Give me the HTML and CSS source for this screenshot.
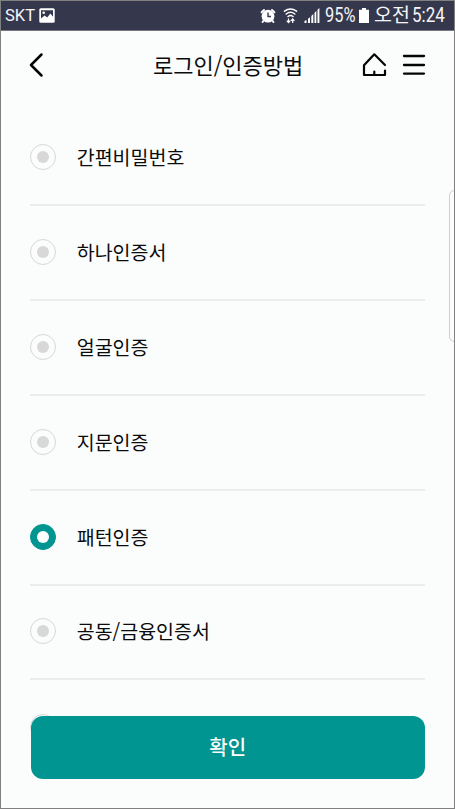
FILE: index.html
```html
<!DOCTYPE html>
<html lang="ko">
<head>
<meta charset="utf-8">
<title>로그인/인증방법</title>
<link rel="stylesheet" href="styles.css">
</head>
<body>
<div class="phone">
  <div class="status">
    <span class="carrier">SKT</span>
    <svg class="photo" width="16" height="15" viewBox="0 0 16 15"><rect x=".3" y=".3" width="15.4" height="14.4" rx="1.5" fill="#fff"/><path d="M2 2.2h12v6.6l-2.6-3.2-3.2 4-2.6-2L2 10.5z" fill="#35384d"/><circle cx="4.7" cy="4.7" r="1.3" fill="#fff"/></svg>
    <svg class="alarm" width="16" height="16" viewBox="0 0 16 16"><circle cx="8" cy="8.2" r="6.4" fill="#fff"/><path d="M1.6 4.3 4 2M14.4 4.3l-2.4-2.3M3.2 13.2l-.6.8M12.8 13.2l.6.8" stroke="#fff" stroke-width="2" stroke-linecap="round"/><path d="M8 4.5v4h3" fill="none" stroke="#35384d" stroke-width="1.4"/></svg>
    <svg class="wifi" width="16" height="17" viewBox="0 0 16 17"><path d="M1.5 4.2q6-4.5 12 0M3.2 7q4.3-3.3 8.6 0M5 9.5q2.5-2 5 0" fill="none" stroke="#fff" stroke-width="1.5" stroke-linecap="round"/><path d="M5.5 11.5v4M3.8 13.6l1.7 2 1.7-2M9.7 16v-4M8 13.9l1.7-2 1.7 2" fill="none" stroke="#fff" stroke-width="1.2"/></svg>
    <svg class="signal" width="16" height="16" viewBox="0 0 16 16"><path d="M.5 15v-2l2-1v3zM4 15v-4.3l2-1.5V15zM7.3 15V8l2-2v9zM10.5 15V4.7l1.8-1.8V15zM13.5 15V1.8L15.4 0v15z" fill="#fff"/></svg>
    <span class="percent"><span class="narrow">95%</span></span>
    <svg class="battery" width="10" height="15" viewBox="0 0 10 15"><path d="M3 0h4v1.8h3V15H0V1.8h3z" fill="#fff"/></svg>
    <span class="ampm">오전</span>
    <span class="time"><span class="narrow">5:24</span></span>
  </div>
  <header class="header">
    <svg class="back" width="16" height="26" viewBox="0 0 16 26"><path d="M13.5 2.5 3 13l10.500 10.500" fill="none" stroke="#050505" stroke-width="2.5" stroke-linecap="round" stroke-linejoin="round"/></svg>
    <h1 class="title">로그인/인증방법</h1>
    <svg class="home" width="26" height="26" viewBox="0 0 26 26"><path d="M23 13 12.300 2.300 2 13.300V23h21v-4.500M12.300 19.500V23" fill="none" stroke="#050505" stroke-width="2.2" stroke-linecap="round" stroke-linejoin="round"/></svg>
    <svg class="menu" width="24" height="22" viewBox="0 0 24 22"><path d="M2 2h20M2 11h20M2 19.600h20" stroke="#050505" stroke-width="2.3" stroke-linecap="round"/></svg>
  </header>
  <main class="list">
    <div class="row"><i class="radio"></i><span>간편비밀번호</span></div>
    <div class="row"><i class="radio"></i><span>하나인증서</span></div>
    <div class="row"><i class="radio"></i><span>얼굴인증</span></div>
    <div class="row"><i class="radio"></i><span>지문인증</span></div>
    <div class="row"><i class="radio checked"></i><span>패턴인증</span></div>
    <div class="row"><i class="radio"></i><span>공동/금융인증서</span></div>
    <div class="row last"><i class="radio"></i></div>
  </main>
  <div class="edge"></div>
  <button class="confirm">확인</button>
</div>
</body>
</html>
```
FILE: styles.css
```css
* { box-sizing: border-box; }
body { margin: 0; }
.phone {
  position: relative;
  width: 455px;
  height: 809px;
  overflow: hidden;
  border: 1px solid #808080;
  background: #fbfdfd;
  color: #0b0b0b;
  font-family: "Noto Sans CJK KR", sans-serif;
}
.status {
  display: flex;
  align-items: center;
  height: 30px;
  padding-left: 4px;
  border-bottom: 1px solid #77787f;
  background: #35384d;
  color: #f5f5f8;
  font: 17px/29px Roboto, sans-serif;
  white-space: nowrap;
}
.status svg { flex: none; }
.carrier { width: 34px; font-size: 16.5px; }
.alarm { margin-left: 205px; }
.wifi { margin-left: 7px; }
.signal { margin-left: 5px; }
.percent { width: 32px; margin-left: 4.5px; font-size: 20px; }
.narrow { display: inline-block; transform: scaleX(.82); transform-origin: left; }
.battery { margin-left: 2.5px; }
.ampm { width: 34px; margin-left: 5px; font: 19.5px/26px "Noto Sans CJK KR", sans-serif; margin-top: -3px; }
.time { margin-left: 4px; font-size: 20px; }
.time .narrow { transform: scaleX(.85); }
.header {
  display: flex;
  align-items: center;
  height: 68px;
  padding-left: 27px;
}
.title {
  width: 154px;
  margin: -2px 0 0 109px;
  font-size: 22px;
  font-weight: 400;
  line-height: 32px;
  white-space: nowrap;
}
.home { margin-left: 55px; }
.menu { margin-left: 14px; }
.list { margin: 12.6px 29px 0; }
.row {
  display: flex;
  align-items: center;
  height: 94.8px;
  padding: 0 0 1px .4px;
  border-bottom: 2px solid #eaecee;
  font-size: 19.5px;
  line-height: 28px;
}
.row.last { border: 0; }
.radio {
  display: grid;
  place-items: center;
  flex: none;
  width: 26px;
  height: 26px;
  margin-right: 20.3px;
  border: 1px solid #d7d7d7;
  border-radius: 50%;
}
.radio::after {
  content: "";
  width: 12px;
  height: 12px;
  border-radius: 50%;
  background: #d8d8d8;
}
.radio.checked { border-color: #009590; background: #009590; }
.radio.checked::after { background: #fff; }
.edge {
  position: absolute;
  top: 189px;
  right: -6px;
  width: 11px;
  height: 152px;
  border: 1px solid #cdcfcf;
  border-radius: 6px;
}
.confirm {
  position: absolute;
  left: 29.5px;
  bottom: 29px;
  width: 394.5px;
  height: 63px;
  padding: 0 0 2px;
  border: 0;
  border-radius: 12px;
  background: #009590;
  color: #fff;
  font: 500 20px/61px "Noto Sans CJK KR", sans-serif;
}
```
